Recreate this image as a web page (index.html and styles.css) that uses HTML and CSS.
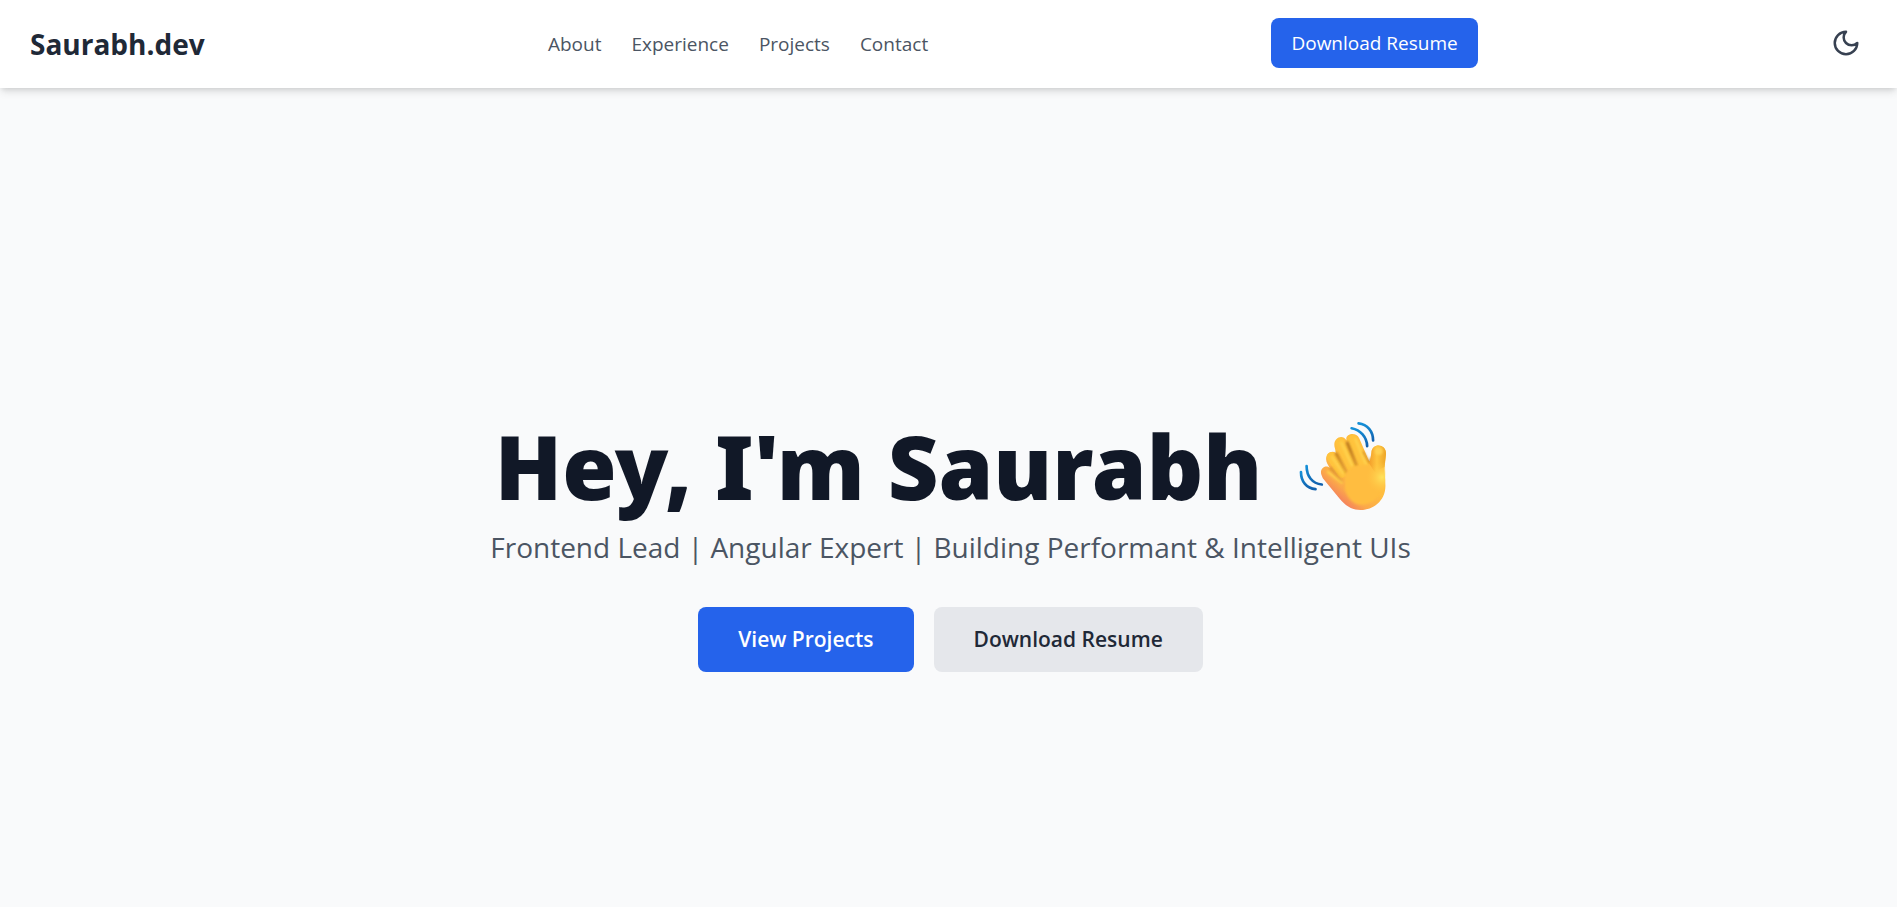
FILE: index.html
```
<!DOCTYPE html>
<html lang="en">
<head>
<meta charset="utf-8">
<meta name="viewport" content="width=device-width, initial-scale=1">
<title>Saurabh.dev</title>
<link rel="stylesheet" href="styles.css">
</head>
<body>
<header class="navbar">
  <a class="brand" href="#home">Saurabh.dev</a>
  <nav class="nav-links">
    <a href="#about">About</a>
    <a href="#experience">Experience</a>
    <a href="#projects">Projects</a>
    <a href="#contact">Contact</a>
  </nav>
  <a class="resume-link" href="#resume">Download Resume</a>
  <button class="theme-toggle" type="button" aria-label="Switch to dark theme">
    <svg viewBox="0 0 24 24" fill="none" stroke="currentColor" stroke-width="2" stroke-linecap="round" stroke-linejoin="round" aria-hidden="true"><path d="M12 3a6 6 0 0 0 9 9 9 9 0 1 1-9-9Z"/></svg>
  </button>
</header>
<main class="hero" id="home">
  <h1 class="hero-title">
    <span>Hey, I'm Saurabh</span>
    <svg class="wave" viewBox="50 35 268 272" role="img" aria-label="Waving hand">
      <defs>
        <linearGradient id="palm" gradientUnits="userSpaceOnUse" x1="165" y1="265" x2="225" y2="195">
          <stop offset="0" stop-color="#f5845c"/><stop offset=".35" stop-color="#fba84a"/><stop offset="1" stop-color="#ffbd3f"/>
        </linearGradient>
        <linearGradient id="finger" x1="0" y1="0" x2="1" y2="0">
          <stop offset="0" stop-color="#f3a02c"/><stop offset=".45" stop-color="#ffc53f"/><stop offset="1" stop-color="#eda528"/>
        </linearGradient>
        <linearGradient id="shade" gradientUnits="userSpaceOnUse" x1="0" y1="120" x2="0" y2="220">
          <stop offset="0" stop-color="#b9781b" stop-opacity=".95"/><stop offset="1" stop-color="#c98020" stop-opacity=".25"/>
        </linearGradient>
        <radialGradient id="glow" gradientUnits="userSpaceOnUse" cx="302" cy="205" r="48">
          <stop offset="0" stop-color="#ffe35c"/><stop offset="1" stop-color="#ffc542" stop-opacity="0"/>
        </radialGradient>
        <linearGradient id="blue" x1="0" y1="0" x2="0" y2="1">
          <stop offset="0" stop-color="#1590d8"/><stop offset="1" stop-color="#1260ad"/>
        </linearGradient>
        <filter id="soft" x="-30%" y="-30%" width="160%" height="160%"><feGaussianBlur stdDeviation="3"/></filter>
      </defs>
      <path fill="url(#palm)" d="M119 198C112 181 130 165 144 177L137 165C124 143 145 119 162 131L160 119C149 89 181 71 195 94C187 75 223 65 233 87L263 157C268 157 269 148 270 130C271 101 315 102 314 135L310 174C308 188 312 204 312 226C315 277 273 304 237 304C208 304 190 289 174 270L123 208Z"/>
      <g fill="none" stroke-linecap="round">
        <path stroke="#ffc33d" stroke-width="27" d="M213 91L246 167M175 100L208 171M148 143L181 193"/>
        <path stroke="#ffd24e" stroke-width="8" filter="url(#soft)" d="M222 91L253 164M179 101L212 169M151 144L185 193M139 189L180 221"/>
        <path stroke="url(#shade)" stroke-width="9" filter="url(#soft)" d="M197 101L225 170M164 134L194 190M147 178L180 216"/>
        <path stroke="#cc8722" stroke-width="4" filter="url(#soft)" d="M245 128L263 160L271 145"/>
      </g>
      <path fill="#ffbd41" filter="url(#soft)" d="M190 199Q211 160 260 169Q296 176 302 220Q300 281 242 288Q204 287 190 241Z"/>
      <path fill="url(#finger)" d="M270 130C271 101 315 102 314 135L309 174L279 188L264 164Z"/>
      <path fill="url(#glow)" d="M255 160H311Q314 220 307 251H255Z"/>
      <circle cx="292" cy="126" r="12" fill="#ffd153" filter="url(#soft)"/>
      <g fill="none" stroke="url(#blue)" stroke-width="8" stroke-linecap="round">
        <path d="M231 42C258 45 275 66 275 94"/>
        <path d="M210 57C237 62 256 84 257 111"/>
        <path d="M74 171C74 202 91 224 120 227"/>
        <path d="M57 189C57 218 74 239 101 241"/>
      </g>
    </svg>
  </h1>
  <p class="hero-subtitle">Frontend Lead | Angular Expert | Building Performant &amp; Intelligent UIs</p>
  <div class="hero-actions">
    <a class="action action-primary" href="#projects">View Projects</a>
    <a class="action action-secondary" href="#resume">Download Resume</a>
  </div>
</main>
</body>
</html>
```
FILE: styles.css
```
*, *::before, *::after { box-sizing: border-box; }

body {
  margin: 0;
  min-height: 100vh;
  display: flex;
  flex-direction: column;
  background: #f9fafb;
  color: #111827;
  font-family: "Open Sans", "Noto Sans", sans-serif;
}

a { color: inherit; text-decoration: none; }

.navbar {
  display: flex;
  align-items: center;
  justify-content: space-between;
  padding: 18px 26px 20px 30px;
  background: #fff;
  box-shadow: 0 5px 8px -1px rgba(0, 0, 0, .1), 0 3px 5px -2px rgba(0, 0, 0, .1);
  position: relative;
}

.brand {
  padding-top: 2px;
  color: #1f2937;
  font-size: 28px;
  font-weight: 700;
  line-height: 40px;
}

.nav-links {
  display: flex;
  gap: 30px;
  padding-top: 2px;
  color: #4b5563;
  font-size: 19px;
  line-height: 30px;
}

.resume-link {
  padding: 10px 20px;
  border-radius: 8px;
  background: #2563eb;
  color: #fff;
  font-size: 19px;
  line-height: 30px;
}

.theme-toggle {
  display: flex;
  padding: 10px;
  border: 0;
  background: none;
  color: #374151;
  cursor: pointer;
}

.theme-toggle svg { width: 30px; height: 30px; }

.hero {
  flex: 1;
  display: flex;
  flex-direction: column;
  align-items: center;
  justify-content: center;
  padding: 98px 30px 0 34px;
  text-align: center;
}

.hero-title {
  display: flex;
  align-items: center;
  gap: 36px;
  margin: 0;
  padding-right: 18px;
  font-family: "Noto Sans", "Open Sans", sans-serif;
  font-size: 88px;
  font-weight: 900;
  line-height: 90px;
}

.wave { width: 90px; height: 90px; }

.hero-subtitle {
  margin: 16px 0 40px;
  color: #4b5563;
  font-size: 28px;
  line-height: 40px;
}

.hero-actions { display: flex; gap: 20px; }

.action {
  padding: 18px 40px;
  border-radius: 8px;
  font-size: 21px;
  font-weight: 600;
  line-height: 29px;
}

.action-primary { background: #2563eb; color: #fff; }
.action-secondary { background: #e5e7eb; color: #1f2937; }
```
